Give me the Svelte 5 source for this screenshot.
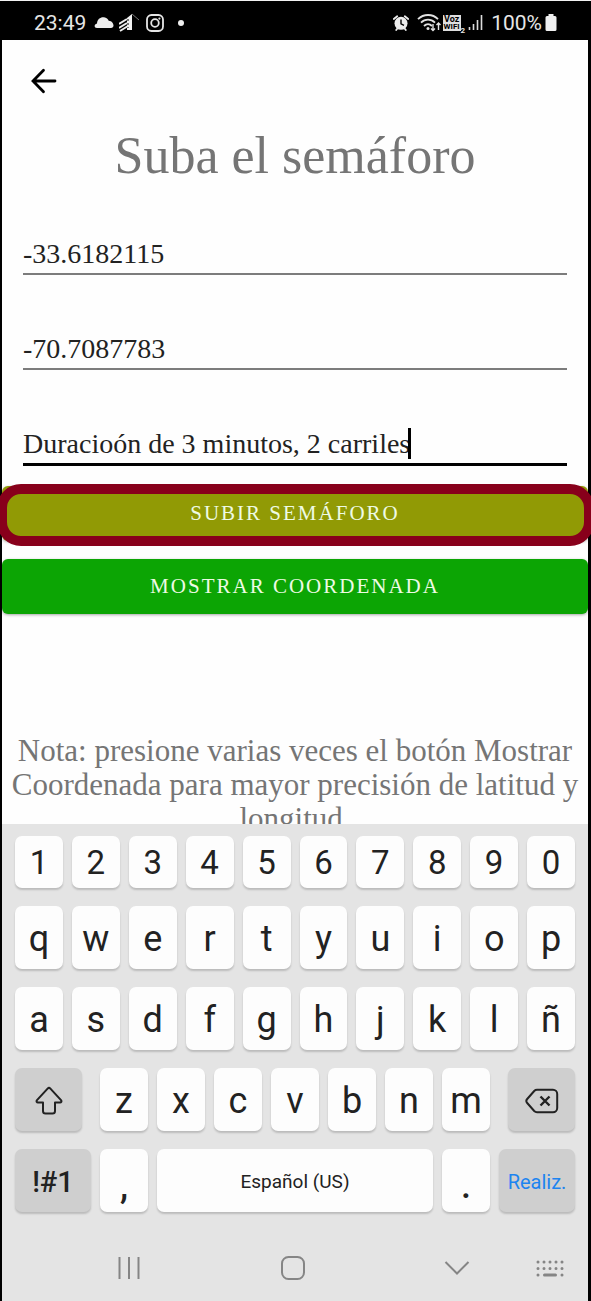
<script>
  let latitude = $state('-33.6182115');
  let longitude = $state('-70.7087783');
  let description = $state('Duracioón de 3 minutos, 2 carriles');

  const plainRows = [
    { keys: [...'1234567890'], digits: true },
    { keys: [...'qwertyuiop'], digits: false },
    { keys: [...'asdfghjklñ'], digits: false }
  ];
  const lastLetters = [...'zxcvbnm'];
</script>

<div class="phone">
  <header class="status">
    <div class="group">
      <span class="clock">23:49</span>
      <svg class="cloud" width="20" height="13" viewBox="0 0 20 13" aria-hidden="true">
        <path d="M3 12C0 12-.3 8.300 3 7.400 3.300 3 6.500.8 10 1.200c2.500.3 4 1.800 4.700 3.600C18 5 19.500 7.500 19.500 9.500c0 1.500-1 2.500-2.500 2.500Z" fill="#ededed" />
      </svg>
      <svg class="tower" width="21" height="20" viewBox="0 0 21 20" aria-hidden="true">
        <path d="M8 5 13 1V17H8Z" fill="#f2f2f2" />
        <path d="M0 11 8 6M0 15l8-5M1 18l8-5" fill="none" stroke="#ededed" stroke-width="2" />
        <path d="M9 6v9" stroke="#000" stroke-width="1" stroke-dasharray="2 2" />
        <path d="m13 1 7 6" stroke="#777" stroke-width="1" />
      </svg>
      <svg class="camera" width="18" height="18" viewBox="0 0 18 18" fill="none" stroke="#e6e6e6" aria-hidden="true">
        <rect x="1" y="1" width="16" height="16" rx="4.5" stroke-width="1.8" />
        <circle cx="9" cy="9" r="3.8" stroke-width="1.8" />
        <circle cx="13.4" cy="4.6" r="1.1" fill="#e6e6e6" stroke="none" />
      </svg>
      <span class="dot"></span>
    </div>
    <div class="group">
      <svg width="16" height="16" viewBox="0 0 16 16" aria-hidden="true">
        <path d="M.8 4 4.2 1.2M15.2 4l-3.4-2.8M3.2 15l1.6-2M12.8 15l-1.6-2" stroke="#ededed" stroke-width="1.8" stroke-linecap="round" />
        <circle cx="8" cy="8.3" r="6.5" fill="#ededed" />
        <path d="M8 4.5v4.3l3 1.5" fill="none" stroke="#000" stroke-width="1.4" />
      </svg>
      <svg class="wifi" width="26" height="19" viewBox="0 0 26 19" fill="none" stroke="#e2e2e2" aria-hidden="true">
        <path d="M1 6.200c5.600-5.600 14.600-5.600 20 0M4 9.700c4-4 10-4 14 0M7 13c2.400-2.400 5.600-2.400 8 0" stroke-width="1.800" />
        <circle cx="11" cy="15.500" r="1.500" fill="#e2e2e2" stroke="none" />
        <path d="M16 11v6.500M14 15.500l2 2 2-2M21.500 17v-7M19.500 12l2-2 2 2" stroke-width="1.400" />
      </svg>
      <span class="voz"><span>Voz</span><span>WIFI</span></span>
      <span class="sim">2</span>
      <svg class="signal" width="15" height="17" viewBox="0 0 15 17" aria-hidden="true">
        <path d="M1.500 13v3M5.500 10v6M9.500 6v10M13.500 1v15" stroke="#dcdcdc" stroke-width="1.600" />
      </svg>
      <span class="percent">100%</span>
      <svg width="12" height="18" viewBox="0 0 12 18" aria-hidden="true">
        <path d="M3.500 0h5v2H10a1.500 1.500 0 0 1 1.500 1.500v12A1.500 1.500 0 0 1 10 17H2A1.500 1.500 0 0 1 .5 15.500v-12A1.500 1.500 0 0 1 2 2h1.500Z" fill="#f0f0f0" />
      </svg>
    </div>
  </header>

  <main>
    <button class="back" aria-label="Volver">
      <svg width="26" height="26" viewBox="0 0 26 26" fill="none" stroke="#000" stroke-width="2.800" stroke-linecap="round" aria-hidden="true">
        <path d="M24 13H2.500M12.500 2.200 2 13l10.500 10.800" />
      </svg>
    </button>

    <h1>Suba el semáforo</h1>

    <form onsubmit={(event) => event.preventDefault()}>
      <div class="fields">
        <div class="field"><input aria-label="Latitud" bind:value={latitude} /></div>
        <div class="field"><input aria-label="Longitud" bind:value={longitude} /></div>
        <div class="field active">
          <input aria-label="Descripción" bind:value={description} />
          <span class="caret"></span>
        </div>
      </div>

      <div class="actions">
        <div class="highlighted">
          <button class="action olive" type="submit">SUBIR SEMÁFORO</button>
          <span class="ring"></span>
        </div>
        <button class="action green" type="button">MOSTRAR COORDENADA</button>
      </div>
    </form>

    <p class="note">Nota: presione varias veces el botón Mostrar Coordenada para mayor precisión de latitud y longitud.</p>
  </main>

  <section class="keyboard" aria-label="Teclado">
    {#each plainRows as row}
      <div class="row ten" class:digits={row.digits}>
        {#each row.keys as key}
          <button class="key">{key}</button>
        {/each}
      </div>
    {/each}
    <div class="row shifted">
      <button class="key special" aria-label="Mayúsculas">
        <svg width="28" height="30" viewBox="0 0 28 30" fill="none" stroke="#222" stroke-width="2" stroke-linejoin="round" aria-hidden="true">
          <path d="M12.600 2.600a2 2 0 0 1 2.800 0L26 14.200c.9 1.100.3 2.300-1 2.300h-5V25a2.500 2.500 0 0 1-2.500 2.500h-7A2.500 2.500 0 0 1 8 25v-8.500H3c-1.300 0-1.900-1.200-1-2.300Z" />
        </svg>
      </button>
      <div class="letters">
        {#each lastLetters as key}
          <button class="key">{key}</button>
        {/each}
      </div>
      <button class="key special" aria-label="Borrar">
        <svg width="34" height="26" viewBox="0 0 34 26" fill="none" stroke="#222" stroke-width="2" aria-hidden="true">
          <path d="M12 1.800h16A4.200 4.200 0 0 1 32.200 6v14a4.200 4.200 0 0 1-4.200 4.200H12c-1.200 0-2-.4-2.800-1.200l-7-8a3 3 0 0 1 0-4l7-8c.8-.8 1.600-1.200 2.800-1.200Z" />
          <path d="m15.500 8.500 9 9m0-9-9 9" stroke-width="2.400" />
        </svg>
      </button>
    </div>
    <div class="row bottom">
      <button class="key special symbols">!#1</button>
      <button class="key mark">,</button>
      <button class="key space">Español (US)</button>
      <button class="key mark">.</button>
      <button class="key special done">Realiz.</button>
    </div>

    <nav>
      <button aria-label="Recientes">
        <svg width="24" height="24" viewBox="0 0 24 24" stroke="#858585" stroke-width="2" aria-hidden="true">
          <path d="M2.500 1v22M12 1v22M21.500 1v22" />
        </svg>
      </button>
      <button aria-label="Inicio">
        <svg width="24" height="24" viewBox="0 0 24 24" fill="none" stroke="#858585" stroke-width="2" aria-hidden="true">
          <rect x="1" y="1" width="22" height="22" rx="6.500" />
        </svg>
      </button>
      <button aria-label="Ocultar teclado">
        <svg width="26" height="24" viewBox="0 0 26 24" fill="none" stroke="#858585" stroke-width="2" aria-hidden="true">
          <path d="m1.500 6 11.500 11.500L24.500 6" />
        </svg>
      </button>
      <button class="switcher" aria-label="Cambiar teclado">
        <svg width="28" height="18" viewBox="0 0 28 18" stroke="#858585" stroke-width="3" stroke-linecap="round" aria-hidden="true">
          <path d="M2 2h.01M8 2h.01M14 2h.01M20 2h.01M26 2h.01M2 8.500h.01M8 8.500h.01M14 8.500h.01M20 8.500h.01M26 8.500h.01M2 15h.01M26 15h.01M8.500 15h11" />
        </svg>
      </button>
    </nav>
  </section>
</div>

<style>
  :global(body) {
    background: #000;
  }

  .phone,
  .phone * {
    box-sizing: border-box;
  }

  .phone {
    display: flex;
    flex-direction: column;
    height: 100vh;
    padding: 0 3px 0 2px;
    overflow: hidden;
    border-top: 1px solid #f2f2f2;
    background: #000;
    font-family: 'Liberation Serif', serif;
  }

  button {
    margin: 0;
    padding: 0;
    border: 0;
    background: none;
    font: inherit;
    color: inherit;
  }

  svg {
    display: block;
    flex: none;
  }

  .status {
    display: flex;
    flex: none;
    align-items: center;
    justify-content: space-between;
    height: 39px;
    padding: 4px 31px 0 32px;
    color: #e6e6e6;
    font: 21px/24px Roboto, sans-serif;
  }

  .group {
    display: flex;
    align-items: center;
  }

  .cloud {
    margin-left: 8px;
  }

  .tower {
    margin-left: 5px;
  }

  .camera {
    margin-left: 6px;
  }

  .dot {
    width: 6px;
    height: 6px;
    margin-left: 14px;
    border-radius: 50%;
    background: #f0f0f0;
  }

  .wifi {
    margin-left: 8px;
  }

  .voz {
    display: flex;
    flex-direction: column;
    width: 18px;
    background: #dedede;
    color: #000;
    font: bold 9px/8px Roboto, sans-serif;
    text-align: center;
  }

  .voz span:last-child {
    font-size: 8px;
  }

  .sim {
    align-self: flex-end;
    font: bold 8px/8px Roboto, sans-serif;
  }

  .signal {
    margin: 0 8px 0 3px;
  }

  .percent {
    margin-right: 3px;
  }

  main {
    flex: 1;
    min-height: 0;
    background: #fefefe;
  }

  .back {
    display: block;
    margin: 28px 0 0 29px;
  }

  h1 {
    margin: 32px 0 0;
    color: #757575;
    font-size: 52px;
    font-weight: 400;
    line-height: 60px;
    text-align: center;
  }

  .fields {
    display: flex;
    flex-direction: column;
    gap: 50px;
    padding: 44px 21px 0;
  }

  .field {
    position: relative;
    display: flex;
    border-bottom: 2px solid #7c7c7c;
  }

  .field.active {
    border-bottom: 3px solid #000;
  }

  input {
    width: 100%;
    height: 43px;
    padding: 4px 0 0;
    border: 0;
    outline: 0;
    background: none;
    color: #222;
    font: 28px/32px 'Liberation Serif', serif;
  }

  .caret {
    position: absolute;
    top: 8px;
    left: 385px;
    width: 3px;
    height: 31px;
    background: #000;
  }

  .actions {
    display: flex;
    flex-direction: column;
    gap: 18px;
    margin-top: 20px;
  }

  .highlighted {
    position: relative;
  }

  .ring {
    position: absolute;
    inset: -2px -6px -5px -5px;
    border: 10px solid #88001b;
    border-radius: 24px;
    pointer-events: none;
  }

  .action {
    display: block;
    width: 100%;
    height: 55px;
    border-radius: 6px;
    box-shadow: 0 1px 3px rgb(0 0 0 / 35%);
    color: #eefbe4;
    font-size: 21px;
    letter-spacing: 2px;
  }

  .olive {
    background: #919a05;
  }

  .green {
    background: #0ca504;
  }

  .note {
    margin: 120px 8px 0;
    color: #757575;
    font-size: 31px;
    line-height: 34px;
    text-align: center;
  }

  .keyboard {
    position: relative;
    display: flex;
    flex: none;
    flex-direction: column;
    gap: 18px;
    padding: 12px 13px 0;
    background: #e4e4e4;
    color: #222;
    font-family: Roboto, sans-serif;
  }

  .row {
    display: grid;
    gap: 9px;
    height: 63px;
  }

  .ten {
    grid-template-columns: repeat(10, 1fr);
  }

  .digits {
    height: 52px;
  }

  .shifted {
    grid-template-columns: 67fr 390fr 67fr;
    gap: 18px;
  }

  .letters {
    display: grid;
    grid-template-columns: repeat(7, 1fr);
    gap: 9px;
  }

  .bottom {
    grid-template-columns: 76fr 48fr 276fr 48fr 76fr;
  }

  .key {
    display: flex;
    align-items: center;
    justify-content: center;
    min-width: 0;
    padding-top: 2px;
    border-radius: 7px;
    background: #fdfdfd;
    box-shadow: 0 2px 2px rgb(0 0 0 / 18%);
    font-size: 36px;
    line-height: 40px;
  }

  .digits .key {
    font-size: 33px;
  }

  .special {
    background: #cfcfcf;
  }

  .symbols {
    font-size: 29px;
    font-weight: 500;
  }

  .mark {
    padding-top: 10px;
    font-weight: 500;
  }

  .space,
  .done {
    font-size: 20px;
  }

  .space {
    font-size: 19px;
  }

  .done {
    color: #1d84f0;
  }

  nav {
    position: relative;
    display: grid;
    grid-template-columns: repeat(3, 1fr);
    height: 89px;
    margin: -18px 36px 0 32px;
    padding-top: 23px;
  }

  nav button {
    display: grid;
    place-items: center;
  }

  nav .switcher {
    position: absolute;
    top: 48px;
    right: -25px;
  }
</style>
